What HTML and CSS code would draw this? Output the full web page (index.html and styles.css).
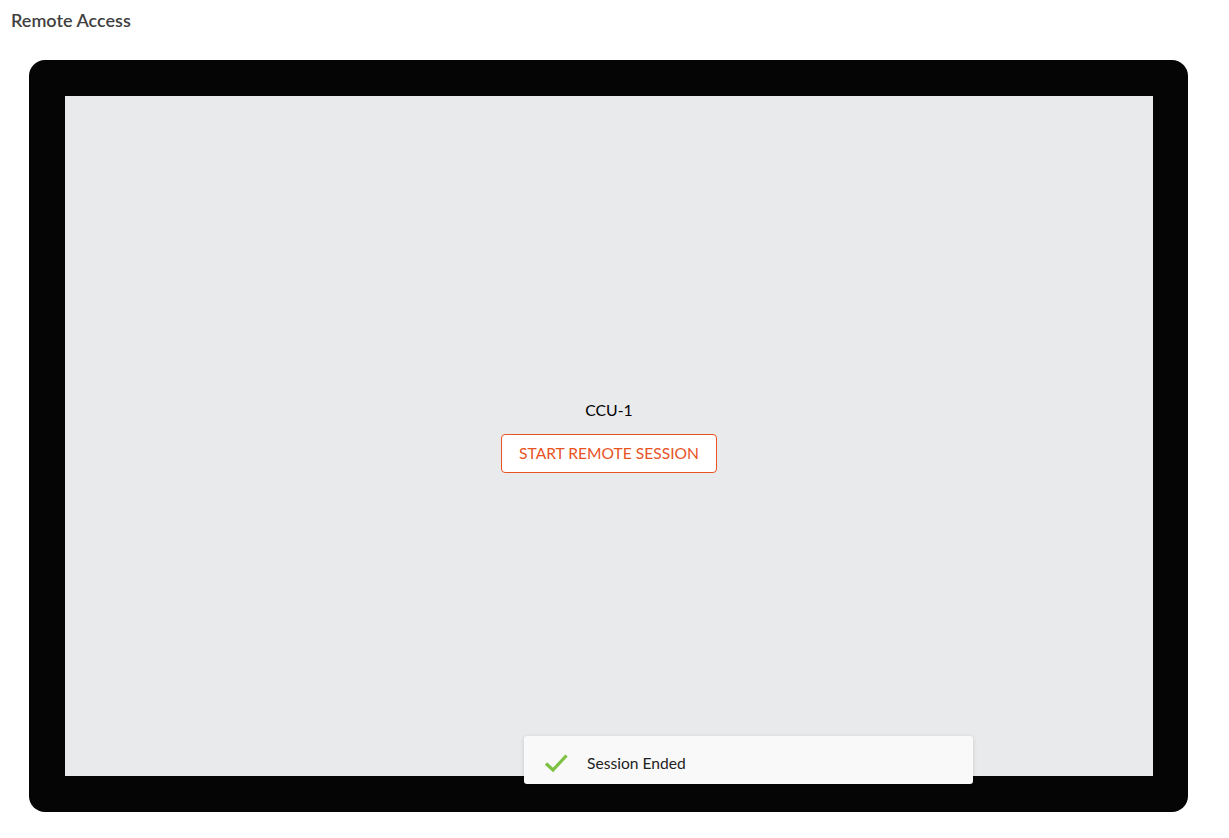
FILE: index.html
```html
<!DOCTYPE html>
<html lang="en">
<head>
  <meta charset="UTF-8" />
  <title>Remote Access</title>
  <link rel="stylesheet" href="styles.css">
</head>
<body>
  <div id="page">
    <h1 class="page-title">Remote Access</h1>

    <div id="device-frame">
      <div id="device-screen">
        <div class="device-name">CCU-1</div>
        <button class="start-btn">START REMOTE SESSION</button>
      </div>
    </div>

    <!-- toast -->
    <div class="toast">
      <svg class="toast-icon" width="24" height="20" viewBox="0 0 24 20">
        <path d="M2 10.5 L9 17 L22.5 2.5" fill="none" stroke="#7cc142" stroke-width="3.2" stroke-linejoin="miter" />
      </svg>
      <span class="toast-text">Session Ended</span>
    </div>
  </div>
</body>
</html>
```

FILE: styles.css
```css
body {
  margin: 0;
  font-family: Lato, "Open Sans", Arial, sans-serif;
  background: #fff;
}

#page {
  position: relative;
  padding: 10px 11px 0;
  height: 838px;
  box-sizing: border-box;
}

.page-title {
  margin: 0;
  font-size: 18px;
  line-height: 20px;
  font-weight: 600;
  color: #3f3f3f;
}

/* 设备外框 */
#device-frame {
  margin: 30px 0 0 18px;
  width: 1159px;
  height: 752px;
  box-sizing: border-box;
  padding: 36px 35px 36px 36px;
  background: #050505;
  border-radius: 16px;
}

#device-screen {
  height: 100%;
  background: #e9eaec;
  display: flex;
  flex-direction: column;
  align-items: center;
  justify-content: center;
  gap: 14px;
  box-sizing: border-box;
}

.device-name {
  font-size: 15.8px;
  line-height: 20px;
  color: #000;
}

.start-btn {
  font-family: inherit;
  font-size: 15.6px;
  color: #e8531f;
  background: #fff;
  border: 1px solid #e8531f;
  border-radius: 4px;
  height: 39px;
  padding: 0 17px;
  cursor: pointer;
}

/* 提示条 */
.toast {
  position: absolute;
  left: 524px;
  top: 736px;
  width: 449px;
  height: 48px;
  box-sizing: border-box;
  background: #f9f9f9;
  border-radius: 3px;
  box-shadow: 0 1px 4px rgba(0, 0, 0, 0.15);
  display: flex;
  align-items: center;
  padding: 5px 0 0 20px;
}

.toast-icon {
  display: block;
  margin-right: 19px;
}

.toast-text {
  font-size: 15.6px;
  color: #222;
}
```
